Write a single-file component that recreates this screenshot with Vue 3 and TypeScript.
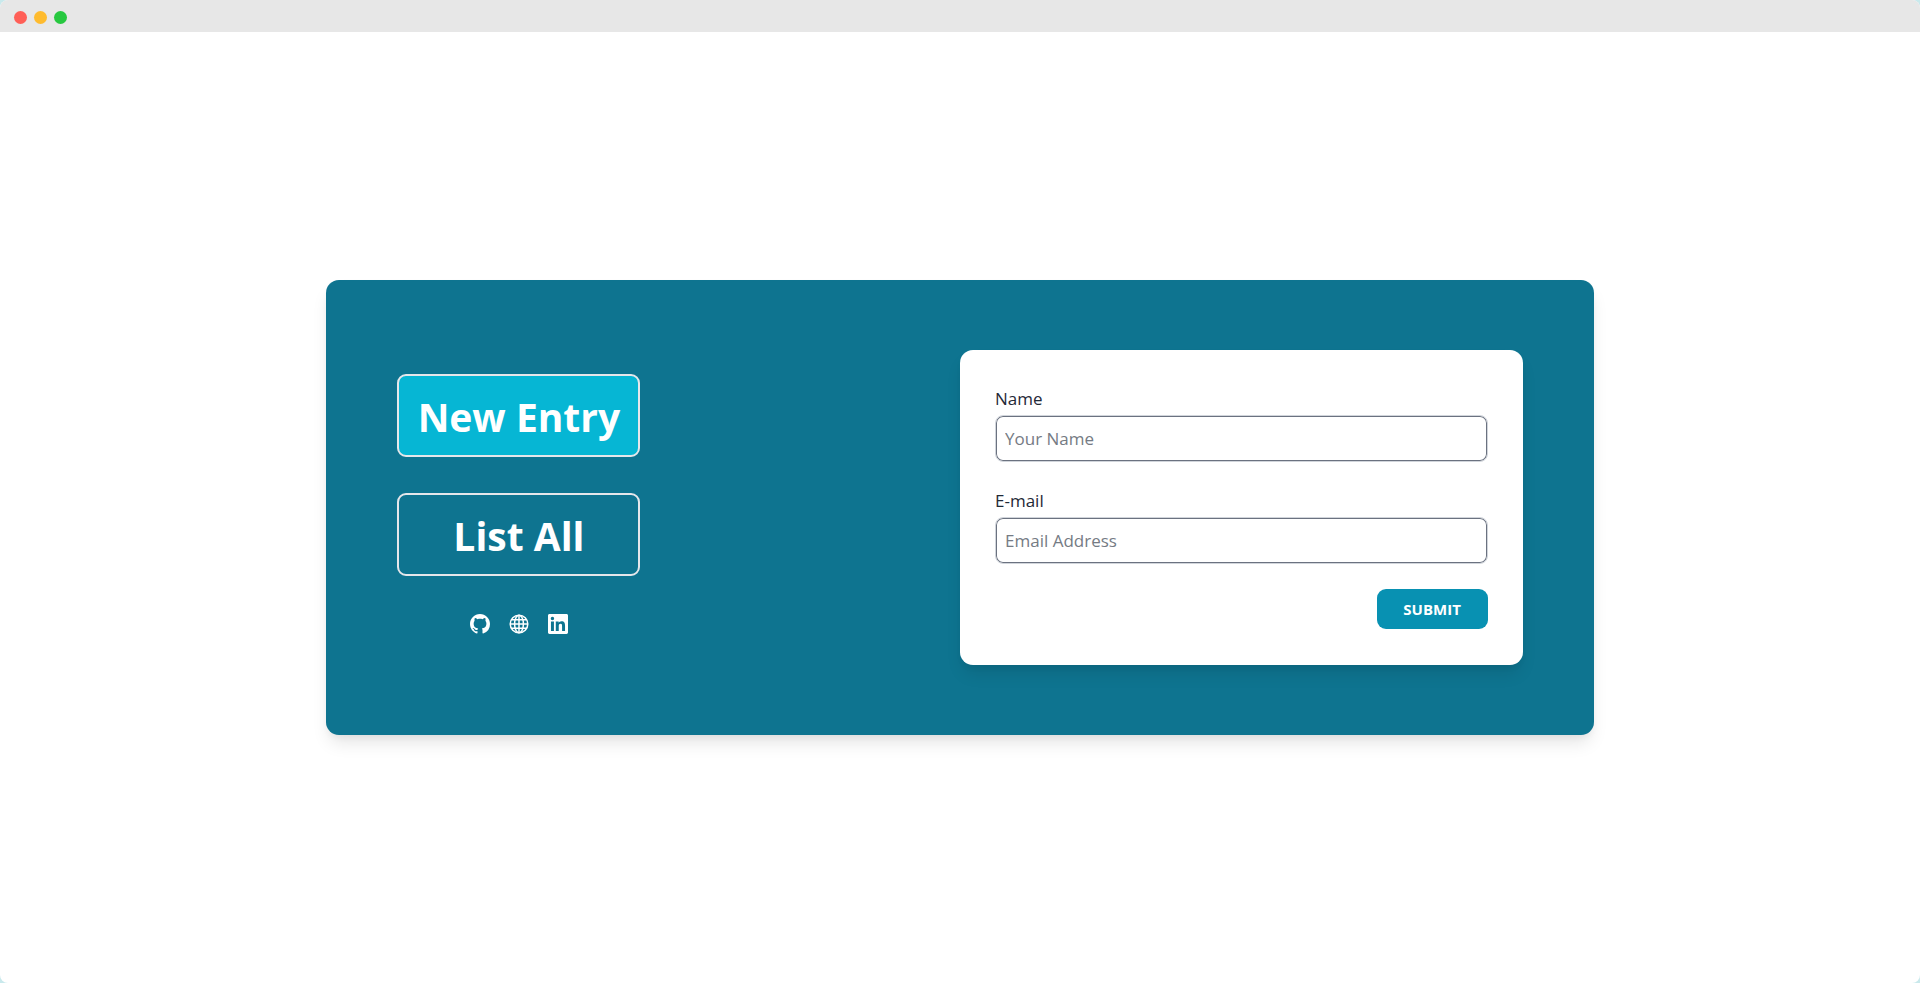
<script setup lang="ts">
import { ref } from 'vue'

type View = 'new' | 'list'

const view = ref<View>('new')
const name = ref('')
const email = ref('')

const tabs: { id: View; label: string }[] = [
  { id: 'new', label: 'New Entry' },
  { id: 'list', label: 'List All' },
]

function submit(): void {
  name.value = ''
  email.value = ''
}
</script>

<template>
  <div class="window">
    <header class="titlebar">
      <span class="dot close"></span>
      <span class="dot minimize"></span>
      <span class="dot expand"></span>
    </header>
    <main class="page">
      <section class="panel">
        <div class="side">
          <nav class="tabs">
            <button
              v-for="tab in tabs"
              :key="tab.id"
              type="button"
              class="tab"
              :class="{ active: view === tab.id }"
              @click="view = tab.id"
            >
              {{ tab.label }}
            </button>
          </nav>
          <div class="links">
            <a href="#github" aria-label="GitHub">
              <svg viewBox="0 0 16 16" fill="currentColor">
                <path d="M8 0C3.58 0 0 3.58 0 8c0 3.54 2.29 6.53 5.47 7.59.4.07.55-.17.55-.38 0-.19-.01-.82-.01-1.49-2.01.37-2.53-.49-2.69-.94-.09-.23-.48-.94-.82-1.13-.28-.15-.68-.52-.01-.53.63-.01 1.08.58 1.23.82.72 1.21 1.87.87 2.33.66.07-.52.28-.87.51-1.07-1.78-.2-3.64-.89-3.64-3.95 0-.87.31-1.59.82-2.15-.08-.2-.36-1.02.08-2.12 0 0 .67-.21 2.2.82.64-.18 1.32-.27 2-.27s1.36.09 2 .27c1.53-1.04 2.2-.82 2.2-.82.44 1.1.16 1.92.08 2.12.51.56.82 1.27.82 2.15 0 3.07-1.87 3.75-3.65 3.95.29.25.54.73.54 1.48 0 1.07-.01 1.93-.01 2.2 0 .21.15.46.55.38A8.01 8.01 0 0 0 16 8c0-4.42-3.58-8-8-8Z" />
              </svg>
            </a>
            <a href="#website" aria-label="Website">
              <svg viewBox="0 0 20 20" fill="none" stroke="currentColor" stroke-width="1.5">
                <circle cx="10" cy="10" r="8.8" />
                <ellipse cx="10" cy="10" rx="4.4" ry="8.8" />
                <path d="M10 1.2v17.6M1.2 10h17.6M2.4 5.7h15.2M2.4 14.3h15.2" />
              </svg>
            </a>
            <a href="#linkedin" aria-label="LinkedIn">
              <svg viewBox="0 0 24 24" fill="currentColor">
                <path d="M22.22 0H1.77C.79 0 0 .77 0 1.73v20.54C0 23.23.79 24 1.77 24h20.45c.98 0 1.78-.77 1.78-1.73V1.73C24 .77 23.2 0 22.22 0ZM7.12 20.45H3.56V9h3.56v11.45ZM5.34 7.43a2.06 2.06 0 1 1 0-4.13 2.06 2.06 0 0 1 0 4.13Zm15.11 13.02h-3.56v-5.57c0-1.33-.02-3.04-1.85-3.04-1.85 0-2.13 1.45-2.13 2.94v5.67H9.35V9h3.41v1.56h.05c.48-.9 1.64-1.85 3.37-1.85 3.6 0 4.27 2.37 4.27 5.46v6.28Z" />
              </svg>
            </a>
          </div>
        </div>
        <form class="form" @submit.prevent="submit">
          <div class="field">
            <label for="name">Name</label>
            <input id="name" v-model="name" type="text" placeholder="Your Name" />
          </div>
          <div class="field">
            <label for="email">E-mail</label>
            <input id="email" v-model="email" type="email" placeholder="Email Address" />
          </div>
          <button type="submit" class="submit">SUBMIT</button>
        </form>
      </section>
    </main>
  </div>
</template>

<style>
body {
  background: #c9e9ec;
}
</style>

<style scoped>
* {
  box-sizing: border-box;
}

.window {
  display: flex;
  flex-direction: column;
  min-height: 100vh;
  overflow: hidden;
  border-radius: 8px;
  background: #fff;
  font-family: "Segoe UI", "Open Sans", "Noto Sans", sans-serif;
}

.titlebar {
  display: flex;
  align-items: center;
  gap: 7px;
  height: 32px;
  padding: 2px 14px 0;
  background: #e7e7e7;
}

.dot {
  width: 13px;
  height: 13px;
  border-radius: 50%;
}

.close {
  background: #ff5f57;
}

.minimize {
  background: #febb2e;
}

.expand {
  background: #27c840;
}

.page {
  display: flex;
  flex: 1;
  align-items: center;
  justify-content: center;
}

.panel {
  display: grid;
  grid-template-columns: 1fr 1fr;
  align-items: center;
  width: 66%;
  padding: 70px 71px;
  border-radius: 13px;
  background: #0e7490;
  box-shadow: 0 11px 17px -3px rgb(0 0 0 / 10%), 0 4px 7px -2px rgb(0 0 0 / 5%);
}

.side {
  display: flex;
  flex-direction: column;
  justify-self: start;
  gap: 36px;
}

.tabs {
  display: flex;
  flex-direction: column;
  gap: 36px;
}

.tab {
  width: 243px;
  height: 83px;
  padding: 4px 0 0;
  border: 2px solid #e5e7eb;
  border-radius: 9px;
  background: transparent;
  color: #fff;
  font: 700 39px/56px "Segoe UI", "Open Sans", "Noto Sans", sans-serif;
  cursor: pointer;
}

.tab.active {
  background: #06b6d4;
}

.links {
  display: flex;
  justify-content: center;
  gap: 19px;
  height: 30px;
  padding-top: 2px;
}

.links a {
  height: 20px;
  color: #fff;
}

.links svg {
  display: block;
  width: 20px;
  height: 20px;
}

.form {
  display: flex;
  flex-direction: column;
  gap: 25px;
  padding: 35px 35px 36px;
  border-radius: 13px;
  background: #fff;
  box-shadow: 0 11px 17px -3px rgb(0 0 0 / 10%), 0 4px 7px -2px rgb(0 0 0 / 5%);
}

.field {
  display: flex;
  flex-direction: column;
  gap: 2px;
}

label {
  color: #1f2937;
  font-size: 17px;
  line-height: 28px;
}

input {
  width: 100%;
  height: 47px;
  padding: 0 9px;
  border: 1px solid #d1d5db;
  border-radius: 8px;
  outline: none;
  background: #fff;
  box-shadow: inset 0 0 0 1px #6b7280;
  color: #1f2937;
  font: 400 17px/26px "Segoe UI", "Open Sans", "Noto Sans", sans-serif;
}

input::placeholder {
  color: #757b84;
  opacity: 1;
}

.submit {
  align-self: flex-end;
  width: 111px;
  height: 40px;
  padding: 0;
  border: 0;
  border-radius: 9px;
  background: #0891b2;
  color: #fff;
  font: 700 15px/22px "Segoe UI", "Open Sans", "Noto Sans", sans-serif;
  cursor: pointer;
}
</style>
